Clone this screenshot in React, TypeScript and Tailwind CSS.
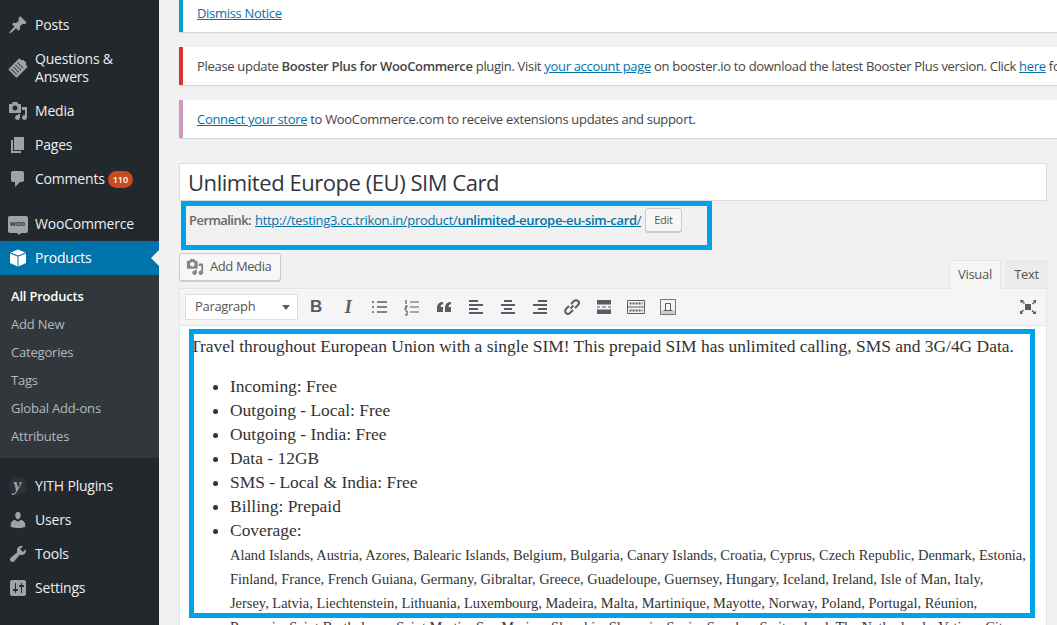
import { ReactNode } from "react";

const ui = "font-['Open_Sans',sans-serif]";

// dashicons, as wp-admin draws them
const icons = {
  post: "M10.44 3.02l1.82-1.82 6.36 6.35-1.83 1.82c-1.05-.68-2.48-.57-3.41.36l-.75.75c-.92.93-1.04 2.35-.35 3.41l-1.83 1.82-2.41-2.41-2.8 2.79c-.42.42-3.38 2.71-3.8 2.29s1.86-3.39 2.28-3.81l2.79-2.79L4.1 9.36l1.83-1.82c1.05.69 2.48.57 3.4-.36l.75-.75c.93-.92 1.05-2.35.36-3.41z",
  media: "M13 11V4c0-.55-.45-1-1-1h-1.67L9 1H5L3.67 3H2c-.55 0-1 .45-1 1v7c0 .55.45 1 1 1h10c.55 0 1-.45 1-1zM7 4.5c1.38 0 2.5 1.12 2.5 2.5S8.38 9.5 7 9.5 4.5 8.38 4.5 7 5.62 4.5 7 4.5zM14 6h5v10.5c0 1.38-1.12 2.5-2.5 2.5S14 17.88 14 16.5s1.12-2.5 2.5-2.5c.17 0 .34.02.5.05V9h-3V6zm-4 8.05V13h2v3.5c0 1.38-1.12 2.5-2.5 2.5S7 17.88 7 16.5 8.12 14 9.5 14c.17 0 .34.02.5.05z",
  page: "M6 15V2h10v13H6zm-1 1h8v2H3V5h2v11z",
  comment: "M5 2h9c1.1 0 2 .9 2 2v7c0 1.1-.9 2-2 2h-2l-5 5v-5H5c-1.1 0-2-.9-2-2V4c0-1.1.9-2 2-2z",
  users: "M10 9.25c-2.27 0-2.73-3.44-2.73-3.44C7 4.02 7.82 2 9.97 2c2.16 0 2.98 2.02 2.71 3.81 0 0-.41 3.44-2.68 3.44zm0 2.57L12.72 10c2.39 0 4.52 2.33 4.52 4.53v2.49s-3.65 1.13-7.24 1.13c-3.65 0-7.24-1.13-7.24-1.13v-2.49c0-2.25 1.94-4.48 4.15-4.48z",
  tools: "M16.68 9.77c-1.34 1.34-3.3 1.67-4.95.99l-5.41 6.52c-.99.99-2.59.99-3.58 0s-.99-2.59 0-3.57l6.52-5.42c-.68-1.65-.35-3.61.99-4.95 1.28-1.28 3.12-1.62 4.72-1.06l-2.89 2.89 2.82 2.82 2.86-2.86c.56 1.6.22 3.45-1.08 4.64z",
  settings: "M18 16V4c0-1.1-.9-2-2-2H4c-1.1 0-2 .9-2 2v12c0 1.1.9 2 2 2h12c1.1 0 2-.9 2-2zM8 11h1c.55 0 1 .45 1 1s-.45 1-1 1H8v1.5c0 .28-.22.5-.5.5s-.5-.22-.5-.5V13H6c-.55 0-1-.45-1-1s.45-1 1-1h1V5.5c0-.28.22-.5.5-.5s.5.22.5.5V11zm5-2h-1c-.55 0-1-.45-1-1s.45-1 1-1h1V5.5c0-.28.22-.5.5-.5s.5.22.5.5V7h1c.55 0 1 .45 1 1s-.45 1-1 1h-1v5.5c0 .28-.22.5-.5.5s-.5-.22-.5-.5V9z",
};

function Dashicon({ d, className = "w-[20px] h-[20px]" }: { d: string; className?: string }) {
  return (
    <svg viewBox="0 0 20 20" className={className} fill="currentColor" fillRule="evenodd">
      <path d={d} />
    </svg>
  );
}

function ProductIcon() {
  return (
    <svg viewBox="0 0 20 20" className="w-[20px] h-[20px]" fill="#fff">
      <path d="M10 1.5l7.5 3-7.5 3-7.5-3z" />
      <path d="M2 5.5l7.5 3v10L2 15z" />
      <path d="M18 5.5l-7.5 3v10L18 15z" />
    </svg>
  );
}

function QaIcon() {
  return (
    <svg viewBox="0 0 20 20" className="w-[20px] h-[20px]">
      <g transform="rotate(45 10 10)">
        <rect x="4" y="2" width="12" height="16" rx="1" fill="#9ea3a8" />
        <rect x="7.5" y="0.5" width="5" height="3" fill="#9ea3a8" />
        <path d="M6 6.5h8M6 9.5h8M6 12.5h8M6 15.5h8" stroke="#23282d" strokeWidth="1" strokeDasharray="1.5 0.5" />
      </g>
    </svg>
  );
}

function WooIcon() {
  return (
    <div className="relative w-[20px] h-[17px] rounded-[2px] bg-[#9ea3a8] flex items-center justify-center text-[6px] font-bold text-[#23282d] leading-none">
      WOO
      <span className="absolute -bottom-[2px] left-[9px] w-0 h-0 border-x-[2px] border-t-[2px] border-x-transparent border-t-[#9ea3a8]" />
    </div>
  );
}

function YithIcon() {
  return (
    <span className="w-[18px] h-[18px] rounded-full bg-[#2a3138] flex items-center justify-center font-['Liberation_Serif',serif] italic font-bold text-[18px] leading-none text-[#9ea3a8] pb-[3px]">
      y
    </span>
  );
}

function MenuItem({ icon, children, className = "h-[34px]" }: { icon: ReactNode; children: ReactNode; className?: string }) {
  return (
    <div className={`flex items-center text-[14px] leading-[18px] ${className}`}>
      <div className="w-[35px] flex justify-center text-[#9ea3a8] shrink-0">{icon}</div>
      <div>{children}</div>
    </div>
  );
}

function Sidebar() {
  const subItems = ["Add New", "Categories", "Tags", "Global Add-ons", "Attributes"];
  return (
    <div className="w-[159px] shrink-0 bg-[#23282d] pt-[8px] h-[625px] text-[#eee] tracking-[-0.2px]">
      <MenuItem icon={<Dashicon d={icons.post} />}>Posts</MenuItem>
      <MenuItem icon={<QaIcon />} className="h-[52px]">
        Questions &amp;<br />Answers
      </MenuItem>
      <MenuItem icon={<Dashicon d={icons.media} />}>Media</MenuItem>
      <MenuItem icon={<Dashicon d={icons.page} />}>Pages</MenuItem>
      <MenuItem icon={<Dashicon d={icons.comment} />}>
        <span className="flex items-center gap-[3px]">
          Comments
          <span className="rounded-full bg-[#ca4a1f] text-white text-[9px] font-semibold leading-[17px] px-[5px] tracking-normal">110</span>
        </span>
      </MenuItem>
      <div className="h-[11px]" />
      <MenuItem icon={<WooIcon />}>WooCommerce</MenuItem>
      <div className="relative">
        <MenuItem icon={<ProductIcon />} className="h-[34px] bg-[#0073aa] text-white">Products</MenuItem>
        <div className="absolute right-0 top-[9px] border-y-[8px] border-r-[8px] border-y-transparent border-r-[#f1f1f1]" />
      </div>
      <div className="bg-[#32373c] h-[183px] pt-[8px] text-[13px]">
        <div className="h-[28px] pl-[11px] flex items-center font-semibold text-white">All Products</div>
        {subItems.map((s) => (
          <div key={s} className="h-[28px] pl-[11px] flex items-center text-[#b4b9be]">{s}</div>
        ))}
      </div>
      <div className="h-[11px]" />
      <MenuItem icon={<YithIcon />}>YITH Plugins</MenuItem>
      <MenuItem icon={<Dashicon d={icons.users} />}>Users</MenuItem>
      <MenuItem icon={<Dashicon d={icons.tools} />}>Tools</MenuItem>
      <MenuItem icon={<Dashicon d={icons.settings} />}>Settings</MenuItem>
    </div>
  );
}

function Notice({ color, children, className = "h-[38px] pt-[2px]" }: { color: string; children: ReactNode; className?: string }) {
  return (
    <div className={`bg-white border-l-4 ${color} shadow-[0_1px_1px_rgba(0,0,0,0.1)] pl-[14px] flex items-center whitespace-nowrap overflow-hidden text-[13px] text-[#444] ${className}`}>
      <div>{children}</div>
    </div>
  );
}

function ToolIcon({ d, width = 2 }: { d: string; width?: number }) {
  return (
    <svg viewBox="0 0 20 20" className="w-[20px] h-[20px]" fill="none" stroke="#555d66" strokeWidth={width}>
      <path d={d} />
    </svg>
  );
}

function Toolbar() {
  return (
    <div className="h-[37px] bg-[#f5f5f5] border-b border-[#e5e5e5] flex items-center pl-[5px] pr-[8px]">
      <div className="w-[113px] h-[26px] bg-white border border-[#ddd] flex items-center justify-between pl-[9px] pr-[7px] text-[13px] text-[#555]">
        Paragraph
        <span className="w-0 h-0 border-x-[4px] border-t-[5px] border-x-transparent border-t-[#555d66]" />
      </div>
      <div className="flex items-center gap-[12px] ml-[8px]">
        <span className="w-[20px] text-center font-['Liberation_Sans',sans-serif] font-bold text-[17px] text-[#555d66]">B</span>
        <span className="w-[20px] text-center font-['Liberation_Serif',serif] italic font-bold text-[18px] text-[#555d66]">I</span>
        <ToolIcon d="M7 5h10M7 10h10M7 15h10M3 4v2M3 9v2M3 14v2" width={1.5} />
        <ToolIcon d="M8 5h9M8 10h9M8 15h9M4 3v4M3 9h2l-2 3h2M3 14h2v4H3" width={1.2} />
        <svg viewBox="0 0 20 20" className="w-[20px] h-[20px]" fill="#555d66">
          <path d="M9 5v2a3 3 0 0 0-2.5 3H9v5H3v-5a6 6 0 0 1 6-5zM17 5v2a3 3 0 0 0-2.5 3H17v5h-6v-5a6 6 0 0 1 6-5z" />
        </svg>
        <ToolIcon d="M3 4h9M3 8h14M3 12h9M3 16h14" />
        <ToolIcon d="M6 4h8M3 8h14M6 12h8M3 16h14" />
        <ToolIcon d="M8 4h9M3 8h14M8 12h9M3 16h14" />
        <svg viewBox="0 0 20 20" className="w-[20px] h-[20px]" fill="none" stroke="#555d66" strokeWidth="2">
          <path d="M8.5 11.5l3-3M7 9l-3 3a2.800 2.800 0 0 0 4 4l3-3M9 7l3-3a2.800 2.800 0 0 1 4 4l-3 3" />
        </svg>
        <svg viewBox="0 0 20 20" className="w-[20px] h-[20px]" fill="#555d66">
          <path d="M3 3h14v4.5H3zM3 12.5h14V17H3zM3 9.5h3v1H3zM8 9.5h4v1H8zM14 9.5h3v1h-3z" />
        </svg>
        <svg viewBox="0 0 20 20" className="w-[20px] h-[20px]" fill="none" stroke="#555d66">
          <path d="M1.5 3.5h17v13h-17zM1.5 10h17" />
          <path d="M3.5 6.5h13M3.5 13.5h13" strokeWidth="2" strokeDasharray="2 1" />
        </svg>
        <svg viewBox="0 0 20 20" className="w-[20px] h-[20px]" fill="none" stroke="#777">
          <path d="M3 14h14v3H3z" fill="#ccc" stroke="none" />
          <path d="M2.5 2.500h15v15h-15z" />
          <path d="M7.5 13V6.500h5V13M5.500 13.500h9" stroke="#555d66" />
        </svg>
      </div>
      <svg viewBox="0 0 16 14" className="w-[16px] h-[14px] ml-auto mr-[2px]" fill="#555d66">
        <path d="M5 4h6v6H5z" />
        <path d="M0 0h4L3 1l2 2-1 1-2-2-1 1.5zM16 0v3.5L15 2.5l-2 2-1-1 2-2L13 0zM0 14v-3.5L1 11.5l2-2 1 1-2 2 1 1.5zM16 14h-3.5l1-1-2-2 1-1 2 2 1.5-1z" />
      </svg>
    </div>
  );
}

function Editor() {
  const bullets = ["Incoming: Free", "Outgoing - Local: Free", "Outgoing - India: Free", "Data - 12GB", "SMS - Local & India: Free", "Billing: Prepaid"];
  return (
    <div className="bg-white px-[10px] pt-[8px] h-[400px] overflow-hidden font-['Liberation_Serif',serif] text-[#333] tracking-normal text-[17.45px] leading-[24px]">
      <p className="whitespace-nowrap">Travel throughout European Union with a single SIM! This prepaid SIM has unlimited calling, SMS and 3G/4G Data.</p>
      <ul className="list-disc pl-[40px] mt-[16px]">
        {bullets.map((b) => (
          <li key={b}>{b}</li>
        ))}
        <li>
          Coverage:
          <div className="mt-[1px] text-[14.45px] leading-[24px] whitespace-nowrap">
            <div>Aland Islands, Austria, Azores, Balearic Islands, Belgium, Bulgaria, Canary Islands, Croatia, Cyprus, Czech Republic, Denmark, Estonia,</div>
            <div>Finland, France, French Guiana, Germany, Gibraltar, Greece, Guadeloupe, Guernsey, Hungary, Iceland, Ireland, Isle of Man, Italy,</div>
            <div>Jersey, Latvia, Liechtenstein, Lithuania, Luxembourg, Madeira, Malta, Martinique, Mayotte, Norway, Poland, Portugal, Réunion,</div>
            <div>Romania, Saint Barthelemy, Saint Martin, San Marino, Slovakia, Slovenia, Spain, Sweden, Switzerland, The Netherlands, Vatican City</div>
          </div>
        </li>
      </ul>
    </div>
  );
}

export default function App() {
  return (
    <div className={`relative flex w-[1057px] h-[625px] overflow-hidden bg-[#f1f1f1] ${ui}`}>
      <Sidebar />
      <div className="flex-1 min-w-0 pl-[20px] tracking-[-0.31px]">
        <Notice color="border-[#00a0d2]" className="h-[32px] pb-[5px]">
          <a className="underline text-[#0073aa]">Dismiss Notice</a>
        </Notice>
        <div className="mt-[15px] flex flex-col gap-[15px]">
          <Notice color="border-[#dc3232]">
            Please update <b className="font-semibold">Booster Plus for WooCommerce</b> plugin. Visit <a className="underline text-[#0073aa]">your account page</a> on booster.io to download the latest Booster Plus version. Click <a className="underline text-[#0073aa]">here</a> for more details.
          </Notice>
          <Notice color="border-[#cc99c2]">
            <a className="underline text-[#0073aa]">Connect your store</a> to WooCommerce.com to receive extensions updates and support.
          </Notice>
        </div>
        <div className="mr-[10px] mt-[25px]">
          <div className="h-[38px] bg-white border border-[#ddd] pl-[8px] flex items-center text-[22px] tracking-[-0.45px] text-[#32373c]">
            Unlimited Europe (EU) SIM Card
          </div>
          <div className="h-[52px] pl-[10px] pt-[7px] flex items-start text-[13px] leading-[24px] text-[#666]">
            <b className="font-semibold tracking-[-0.55px]">Permalink:</b>
            <a className="underline text-[#0073aa] ml-[4px]">
              http://testing3.cc.trikon.in/product/<b className="font-semibold">unlimited-europe-eu-sim-card</b>/
            </a>
            <span className="ml-[4px] h-[24px] px-[8px] rounded-[3px] border border-[#ccc] bg-[#f7f7f7] shadow-[0_1px_0_#ccc] text-[11px] leading-[22px] text-[#555]">Edit</span>
          </div>
          <div className="flex items-end justify-between h-[35px]">
            <div className="self-start w-[102px] h-[28px] pl-[6px] rounded-[3px] border border-[#ccc] bg-[#f7f7f7] shadow-[0_1px_0_#ccc] flex items-center gap-[6px] text-[13px] tracking-[-0.4px] text-[#555]">
              <Dashicon d={icons.media} className="w-[18px] h-[18px] text-[#82878c]" />
              Add Media
            </div>
            <div className="flex items-end gap-[5px] text-[13px] text-[#555]">
              <div className="h-[29px] w-[52px] flex items-center justify-center border border-[#e5e5e5] border-b-0 bg-[#f5f5f5] -mb-[1px] relative">Visual</div>
              <div className="h-[28px] w-[41px] flex items-center justify-center border border-[#e5e5e5] border-b-0 bg-[#ebebeb]">Text</div>
            </div>
          </div>
          <div className="border border-[#e5e5e5]">
            <Toolbar />
            <Editor />
          </div>
        </div>
      </div>
      {/* annotation boxes drawn over the screenshot */}
      <div className="absolute left-[181px] top-[201px] w-[531px] h-[49px] border-[5px] border-[#00a2e8]" />
      <div className="absolute left-[189px] top-[329px] w-[846px] h-[289px] border-[5px] border-[#00a2e8]" />
    </div>
  );
}
